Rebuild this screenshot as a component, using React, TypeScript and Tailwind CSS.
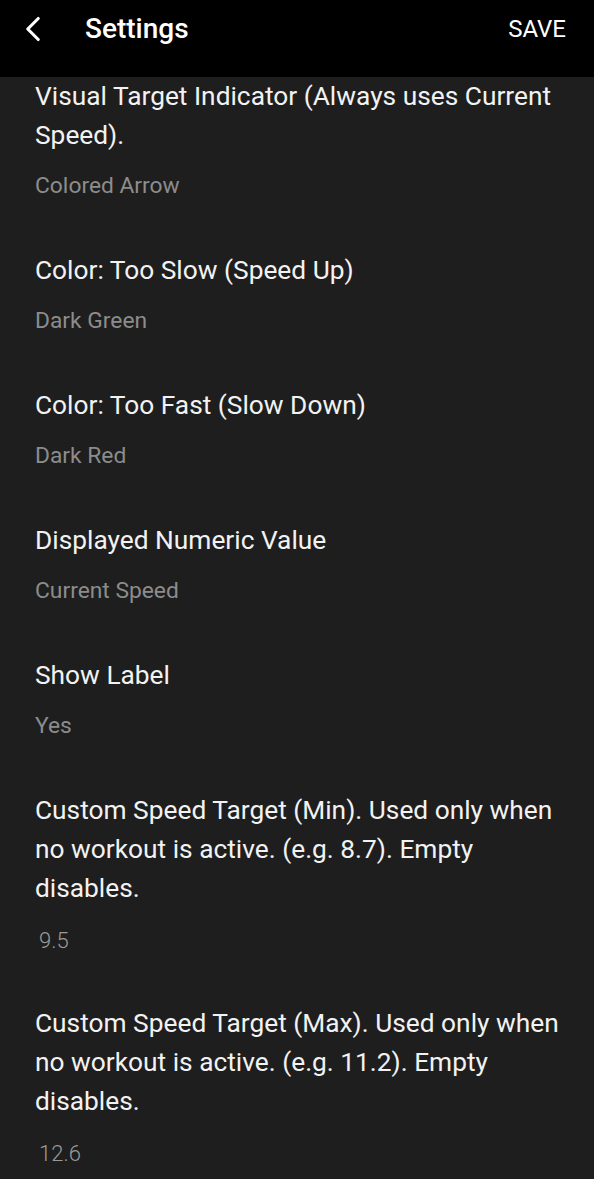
import { ChevronLeft } from "lucide-react";

type Pref = { title: string; summary: string; input?: boolean };

const prefs: Pref[] = [
    { title: "Visual Target Indicator (Always uses Current Speed).", summary: "Colored Arrow" },
    { title: "Color: Too Slow (Speed Up)", summary: "Dark Green" },
    { title: "Color: Too Fast (Slow Down)", summary: "Dark Red" },
    { title: "Displayed Numeric Value", summary: "Current Speed" },
    { title: "Show Label", summary: "Yes" },
    { title: "Custom Speed Target (Min). Used only when no workout is active. (e.g. 8.7). Empty disables.", summary: "9.5", input: true },
    { title: "Custom Speed Target (Max). Used only when no workout is active. (e.g. 11.2). Empty disables.", summary: "12.6", input: true },
];

export default function App() {
    return (
        <div className="w-[594px] h-[1179px] overflow-hidden bg-[#1e1e1e] flex flex-col" style={{ fontFamily: "Roboto, 'Noto Sans', sans-serif" }}>
            <div className="h-[77px] shrink-0 bg-black flex items-center pb-[19px]">
                <ChevronLeft className="ml-[12px] w-[42px] h-[42px] text-white" strokeWidth={1.8} />
                <h1 className="ml-[31px] text-[28px] font-medium text-white">Settings</h1>
                <button className="ml-auto mr-[28px] text-[24px] text-white">SAVE</button>
            </div>
            <div className="flex flex-col">
                {prefs.map((p, idx) => (
                    <div key={idx} className={`pl-[35px] pr-[30px] ${idx === 0 ? "pt-0" : "pt-[26px]"} ${p.input ? "pb-[23px]" : "pb-[25px]"}`}>
                        <div className="text-[26.3px] leading-[39px] text-[#f2f2f2]">{p.title}</div>
                        {p.input ? (
                            <div className="mt-[19px] pl-[4px] text-[22px] leading-[28px] font-light text-[#9a9a9a]">{p.summary}</div>
                        ) : (
                            <div className="mt-[17px] text-[22.8px] leading-[28px] text-[#8c8c8c]">{p.summary}</div>
                        )}
                    </div>
                ))}
            </div>
        </div>
    );
}
